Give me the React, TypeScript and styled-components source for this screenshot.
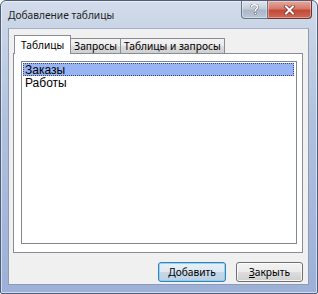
import React from "react";
import styled, { createGlobalStyle } from "styled-components";

const Global = createGlobalStyle`
  html, body { margin: 0; padding: 0; background: #ffffff; }
  #root { width: 318px; height: 294px; }
`;

const Window = styled.div`
  box-sizing: border-box;
  width: 318px;
  height: 294px;
  border: 1px solid #4f5d78;
  border-radius: 6px 6px 2px 2px;
  background: linear-gradient(to bottom, #d3dceb 0px, #c9d5e6 26px, #b0c1de 120px, #9cb0d8 294px);
  box-shadow: inset 0 0 0 1px rgba(255, 255, 255, 0.55);
  display: flex;
  flex-direction: column;
  font-family: "Noto Sans", "Open Sans", sans-serif;
`;

const TitleBar = styled.div`
  height: 27px;
  display: flex;
  align-items: flex-start;
  flex: none;
`;

const Title = styled.div`
  padding: 8px 0 0 7px;
  font-size: 10.2px;
  line-height: 13px;
  color: #1e1e1e;
`;

const Controls = styled.div`
  margin-left: auto;
  margin-right: 5px;
  display: flex;
`;

const CaptionButton = styled.div<{ $kind: "help" | "close" }>`
  box-sizing: border-box;
  height: 18px;
  width: ${(p) => (p.$kind === "close" ? "44px" : "27px")};
  border: 1px solid ${(p) => (p.$kind === "close" ? "#6b3530" : "#6a7688")};
  border-top: none;
  border-left-width: ${(p) => (p.$kind === "close" ? "0" : "1px")};
  border-radius: ${(p) => (p.$kind === "close" ? "0 0 4px 0" : "0 0 0 4px")};
  background: ${(p) =>
    p.$kind === "close"
      ? "linear-gradient(to bottom, #e5a99f 0%, #d47a6c 45%, #c24a39 55%, #cf6a55 100%)"
      : "linear-gradient(to bottom, #dfe5ee 0%, #c3cdda 45%, #aab6c8 55%, #bcc7d6 100%)"};
  box-shadow: inset 0 0 0 1px rgba(255, 255, 255, 0.35);
  display: flex;
  align-items: center;
  justify-content: center;
`;

const Client = styled.div`
  flex: 1;
  margin: 0 8px 8px 7px;
  background: #f0f0f0;
  border: 1px solid #8d9bb3;
  border-top-color: #a3b0c6;
  display: flex;
  flex-direction: column;
  min-height: 0;
`;

const TabArea = styled.div`
  margin: 6px 5px 0 4px;
  display: flex;
  flex-direction: column;
  height: 218px;
`;

const TabRow = styled.div`
  display: flex;
  align-items: flex-end;
  padding-left: 1px;
  height: 19px;
  position: relative;
  z-index: 1;
  margin-bottom: -1px;
`;

const Tab = styled.div<{ $active?: boolean }>`
  box-sizing: border-box;
  height: ${(p) => (p.$active ? "19px" : "16px")};
  padding: ${(p) => (p.$active ? "2px 6px 0 6px" : "0 3px 0 3px")};
  margin-left: ${(p) => (p.$active ? "0" : "-1px")};
  border: 1px solid #898c95;
  border-bottom: ${(p) => (p.$active ? "none" : "1px solid #898c95")};
  background: ${(p) =>
    p.$active ? "#ffffff" : "linear-gradient(to bottom, #f2f2f2 0%, #ebebeb 50%, #dddddd 51%, #cfcfcf 100%)"};
  font-size: 10.2px;
  line-height: 14px;
  color: #000;
  white-space: nowrap;
  position: relative;
  z-index: ${(p) => (p.$active ? 2 : 1)};
`;

const Pane = styled.div`
  flex: 1;
  box-sizing: border-box;
  border: 1px solid #898c95;
  background: #ffffff;
  padding: 7px 5px 8px 7px;
  display: flex;
`;

const ListBox = styled.div`
  flex: 1;
  box-sizing: border-box;
  border: 1px solid #828790;
  background: #ffffff;
  padding: 1px;
`;

const Item = styled.div<{ $selected?: boolean }>`
  box-sizing: border-box;
  height: 13px;
  margin-right: 1px;
  padding-left: 1px;
  font-family: "Liberation Sans", Arial, sans-serif;
  font-size: 12px;
  line-height: 12px;
  color: #000;
  background: ${(p) => (p.$selected ? "#98b4f3" : "transparent")};
  border: 1px ${(p) => (p.$selected ? "dotted #3a4a6a" : "solid transparent")};
`;

const ButtonRow = styled.div`
  display: flex;
  justify-content: flex-end;
  gap: 10px;
  margin: 9px 5px 0 0;
`;

const Button = styled.div<{ $default?: boolean }>`
  box-sizing: border-box;
  width: ${(p) => (p.$default ? "68px" : "67px")};
  height: 20px;
  border: 1px solid ${(p) => (p.$default ? "#3c7fb1" : "#707070")};
  border-radius: 3px;
  background: ${(p) =>
    p.$default
      ? "linear-gradient(to bottom, #e7f0f8 0%, #dce8f3 50%, #c6d8e9 51%, #bcd1e5 100%)"
      : "linear-gradient(to bottom, #f2f2f2 0%, #ebebeb 50%, #dddddd 51%, #cfcfcf 100%)"};
  box-shadow: inset 0 0 0 1px ${(p) => (p.$default ? "rgba(120, 210, 245, 0.8)" : "rgba(255, 255, 255, 0.8)")};
  display: flex;
  align-items: center;
  justify-content: center;
  font-size: 10.2px;
  color: #000;
`;

const Mnemonic = styled.span`
  text-decoration: underline;
`;

export default function App() {
  return (
    <>
      <Global />
      <Window>
        <TitleBar>
          <Title>Добавление таблицы</Title>
          <Controls>
            <CaptionButton $kind="help">
              <svg width="9" height="11" viewBox="0 0 9 11">
                <path
                  d="M1.5 3.2 C1.5 1.5 3 0.8 4.5 0.8 C6.2 0.8 7.5 1.8 7.5 3.3 C7.5 5 5.2 5.3 5.2 7"
                  fill="none"
                  stroke="#5a6272"
                  strokeWidth="2.6"
                />
                <path
                  d="M1.5 3.2 C1.5 1.5 3 0.8 4.5 0.8 C6.2 0.8 7.5 1.8 7.5 3.3 C7.5 5 5.2 5.3 5.2 7"
                  fill="none"
                  stroke="#ffffff"
                  strokeWidth="1.6"
                />
                <rect x="4.2" y="8.3" width="2" height="2" fill="#ffffff" stroke="#5a6272" strokeWidth="0.5" />
              </svg>
            </CaptionButton>
            <CaptionButton $kind="close">
              <svg width="11" height="10" viewBox="0 0 11 10">
                <path d="M2 1.5 L9 8.5 M9 1.5 L2 8.5" stroke="#7a2a22" strokeWidth="3.4" strokeLinecap="square" />
                <path d="M2 1.5 L9 8.5 M9 1.5 L2 8.5" stroke="#ffffff" strokeWidth="2" strokeLinecap="square" />
              </svg>
            </CaptionButton>
          </Controls>
        </TitleBar>
        <Client>
          <TabArea>
            <TabRow>
              <Tab $active>Таблицы</Tab>
              <Tab>Запросы</Tab>
              <Tab>Таблицы и запросы</Tab>
            </TabRow>
            <Pane>
              <ListBox>
                <Item $selected>Заказы</Item>
                <Item>Работы</Item>
              </ListBox>
            </Pane>
          </TabArea>
          <ButtonRow>
            <Button $default>Добавить</Button>
            <Button>
              <span>
                <Mnemonic>З</Mnemonic>акрыть
              </span>
            </Button>
          </ButtonRow>
        </Client>
      </Window>
    </>
  );
}
